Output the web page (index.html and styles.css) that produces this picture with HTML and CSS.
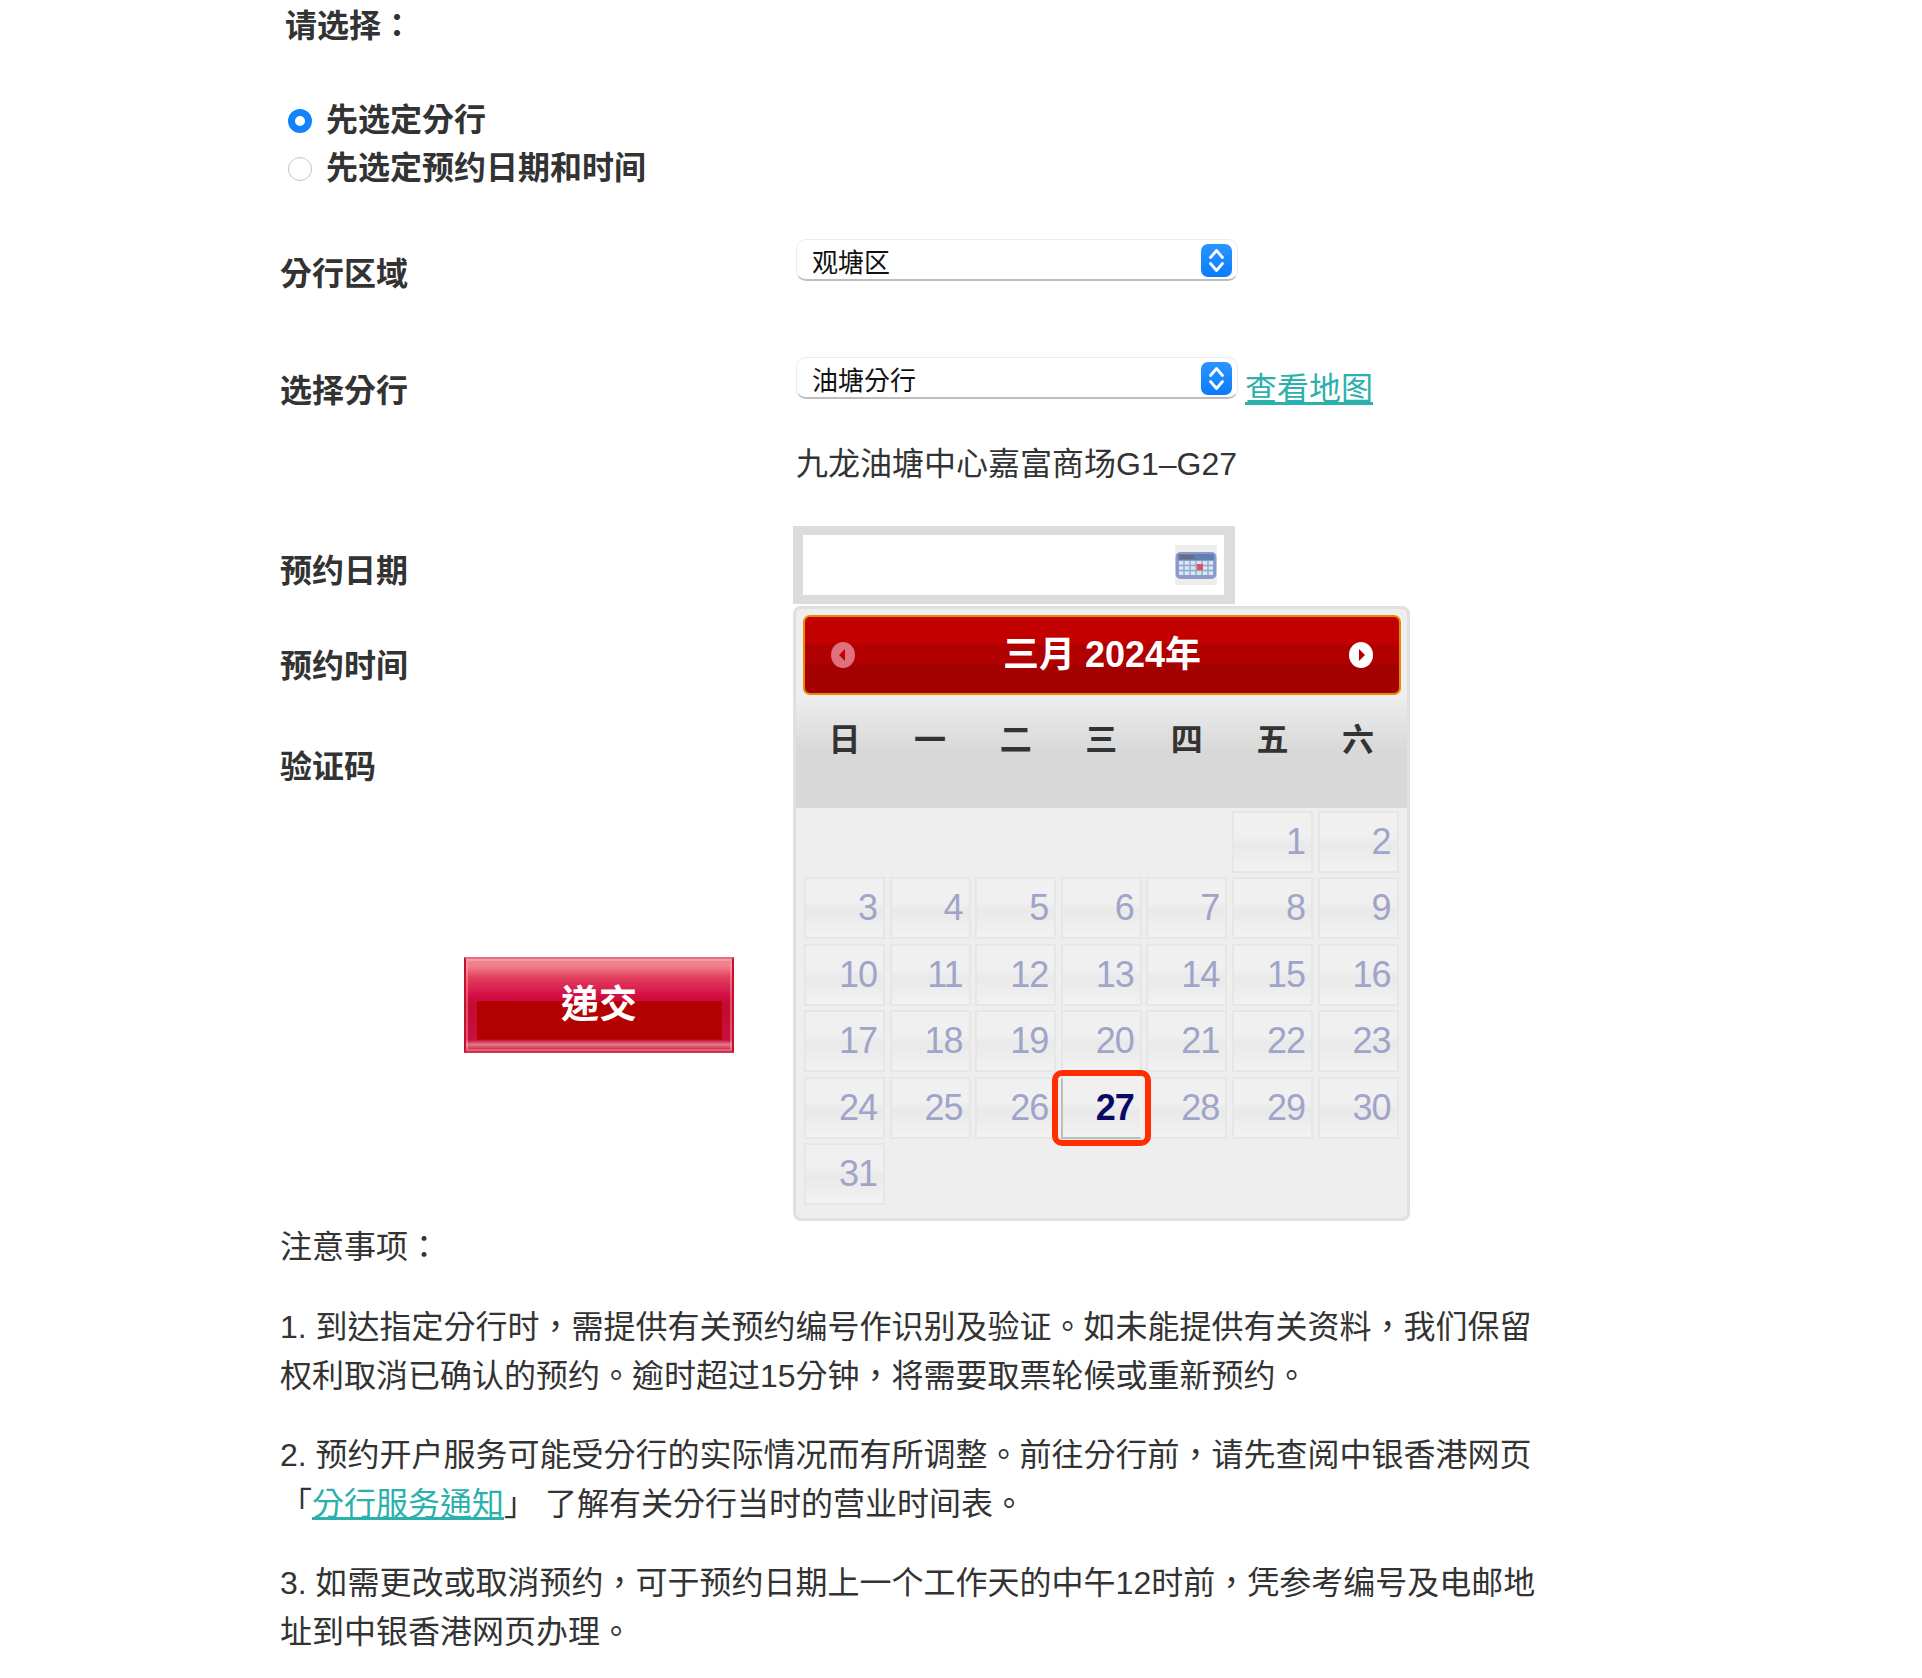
FILE: index.html
```html
<!DOCTYPE html>
<html lang="zh-Hant">
<head>
    <meta charset="utf-8">
    <title>预约开户</title>
    <link rel="stylesheet" href="styles.css">
</head>
<body>
    <div class="page">
        <div class="choose-title">请选择：</div>
        <div class="choices">
            <label class="choice"><input type="radio" name="mode" checked>先选定分行</label>
            <label class="choice"><input type="radio" name="mode">先选定预约日期和时间</label>
        </div>

        <div class="row row-area">
            <div class="field-label">分行区域</div>
            <div class="fake-select">
                <span>观塘区</span>
                <span class="select-arrows">
                    <svg width="31" height="33" viewBox="0 0 31 33"><path d="M9.5 13.5l6-7 6 7M9.5 19.5l6 7 6-7" fill="none" stroke="#fff" stroke-width="2.8" stroke-linecap="round" stroke-linejoin="round"/></svg>
                </span>
            </div>
        </div>

        <div class="row row-branch">
            <div class="field-label">选择分行</div>
            <div class="fake-select">
                <span>油塘分行</span>
                <span class="select-arrows">
                    <svg width="31" height="33" viewBox="0 0 31 33"><path d="M9.5 13.5l6-7 6 7M9.5 19.5l6 7 6-7" fill="none" stroke="#fff" stroke-width="2.8" stroke-linecap="round" stroke-linejoin="round"/></svg>
                </span>
            </div>
            <a class="map-link" href="#">查看地图</a>
        </div>

        <div class="address">九龙油塘中心嘉富商场G1–G27</div>

        <div class="lower">
            <div class="lower-left">
                <div class="field-label label-date">预约日期</div>
                <div class="field-label label-time">预约时间</div>
                <div class="field-label label-code">验证码</div>
                <button class="submit-btn">递交</button>
            </div>
            <div class="lower-right">
                <div class="date-box">
                    <span class="date-icon">
                        <svg width="42" height="40" viewBox="0 0 42 40">
                            <rect width="42" height="40" fill="#eeeeee"/>
                            <rect x="0.5" y="7" width="41" height="27" rx="5" fill="#8e9bca"/>
                            <rect x="3" y="9" width="36" height="6" fill="#5f80b4"/>
                            <rect x="5" y="10" width="14" height="4" fill="#6d6d78"/>
                            <rect x="4" y="16" width="34" height="14" fill="#d5e8f2"/>
                            <path d="M9 16v14M15 16v14M21 16v14M27 16v14M33 16v14M4 20.5h34M4 25.5h34" stroke="#94a6cf" stroke-width="1.4"/>
                            <rect x="22" y="19" width="6" height="6" fill="#e2515c"/>
                        </svg>
                    </span>
                </div>
                <div class="calendar">
                    <div class="cal-head">
                        <svg class="cal-nav" width="26" height="28" viewBox="0 0 26 28"><ellipse cx="13" cy="14" rx="12" ry="13" fill="#e0707f"/><path d="M15 8v12l-6-6z" fill="#c00000"/></svg>
                        <span class="cal-title">三月 2024年</span>
                        <svg class="cal-nav" width="26" height="28" viewBox="0 0 26 28"><ellipse cx="13" cy="14" rx="12" ry="13" fill="#fff"/><path d="M11 8v12l6-6z" fill="#b00000"/></svg>
                    </div>
                    <div class="cal-weekdays">
                        <span>日</span><span>一</span><span>二</span><span>三</span><span>四</span><span>五</span><span>六</span>
                    </div>
                    <div class="cal-days">
                        <div class="day first-day">1</div><div class="day">2</div>
                        <div class="day">3</div><div class="day">4</div><div class="day">5</div><div class="day">6</div><div class="day">7</div><div class="day">8</div><div class="day">9</div>
                        <div class="day">10</div><div class="day">11</div><div class="day">12</div><div class="day">13</div><div class="day">14</div><div class="day">15</div><div class="day">16</div>
                        <div class="day">17</div><div class="day">18</div><div class="day">19</div><div class="day">20</div><div class="day">21</div><div class="day">22</div><div class="day">23</div>
                        <div class="day">24</div><div class="day">25</div><div class="day">26</div><div class="day today">27</div><div class="day">28</div><div class="day">29</div><div class="day">30</div>
                        <div class="day">31</div>
                    </div>
                </div>
            </div>
        </div>

        <div class="notes">
            <div class="notes-title">注意事项：</div>
            <p>1. 到达指定分行时，需提供有关预约编号作识别及验证。如未能提供有关资料，我们保留权利取消已确认的预约。逾时超过15分钟，将需要取票轮候或重新预约。</p>
            <p>2. 预约开户服务可能受分行的实际情况而有所调整。前往分行前，请先查阅中银香港网页「<a href="#">分行服务通知</a>」 了解有关分行当时的营业时间表。</p>
            <p>3. 如需更改或取消预约，可于预约日期上一个工作天的中午12时前，凭参考编号及电邮地址到中银香港网页办理。</p>
        </div>
    </div>
</body>
</html>
```

FILE: styles.css
```css
body {
    margin: 0;
    background-color: #fff;
    color: #333;
    font-family: "Liberation Sans", "Noto Sans CJK TC", sans-serif;
    font-size: 32px;
    line-height: 48px;
}

.page {
    width: 1277px;
    margin-left: 280px;
    padding-top: 2px;
}

.choose-title {
    font-weight: bold;
    padding-left: 5px;
}

.choices {
    margin-top: 46px;
    padding-left: 8px;
}

.choice {
    display: flex;
    align-items: center;
    font-weight: bold;
}

.choice input {
    appearance: none;
    width: 24px;
    height: 24px;
    margin: 2px 14px 0 0;
    border: 1px solid #c4c4c4;
    border-radius: 50%;
    background-color: #fff;
}

.choice input:checked {
    border: 7px solid #1482fa;
}

.row {
    display: flex;
    align-items: flex-start;
}

.row-area {
    margin-top: 47px;
}

.row-branch {
    margin-top: 59px;
}

.field-label {
    font-weight: bold;
}

.row .field-label {
    width: 516px;
    padding-top: 11px;
}

.row-branch .field-label {
    padding-top: 10px;
}

.fake-select {
    display: flex;
    justify-content: space-between;
    width: 442px;
    height: 42px;
    box-sizing: border-box;
    padding: 4px 5px 0 15px;
    border: 1px solid #ececec;
    border-bottom: 2px solid #bdbdbd;
    border-radius: 10px;
    color: #111;
    font-size: 26px;
    line-height: 38px;
}

.select-arrows {
    display: block;
    width: 31px;
    height: 33px;
    border-radius: 7px;
    background: linear-gradient(#2b95ff, #0a7bff);
}

.map-link {
    margin: 8px 0 0 7px;
    color: #2bb0ac;
}

.address {
    margin: 25px 0 0 516px;
}

.lower {
    display: flex;
    margin-top: 38px;
}

.lower-left {
    width: 513px;
}

.label-date {
    margin-top: 21px;
}

.label-time {
    margin-top: 47px;
}

.label-code {
    margin-top: 53px;
}

.submit-btn {
    display: block;
    width: 270px;
    height: 96px;
    margin: 166px 0 0 184px;
    padding: 0 0 9px;
    border: 2px solid #c8102e;
    border-top-color: #e0707f;
    border-bottom-color: #d0354f;
    box-shadow: inset 0 0 0 2px rgba(255, 190, 190, 0.4);
    background:
        linear-gradient(#b30000, #b30000) center 78% / 92% 42% no-repeat,
        linear-gradient(#f0868f 0, #ef7f8a 8%, #e3405f 20%, #d40d45 40%, #c50a30 50%, #c8103f 88%, #e47a86 93%, #c8103a 100%);
    color: #fff;
    font-family: inherit;
    font-size: 38px;
    font-weight: bold;
}

.date-box {
    display: flex;
    justify-content: flex-end;
    align-items: center;
    width: 442px;
    height: 78px;
    box-sizing: border-box;
    padding-right: 7px;
    border: solid #dcdcdc;
    border-width: 9px 11px 9px 10px;
    background-color: #fff;
}

.date-icon {
    display: flex;
}

.calendar {
    width: 617px;
    box-sizing: border-box;
    margin-top: 2px;
    padding-bottom: 13px;
    border: 3px solid #e0e0e0;
    border-radius: 8px;
    background-color: #eee;
}

.cal-head {
    display: flex;
    justify-content: space-between;
    align-items: center;
    height: 80px;
    box-sizing: border-box;
    margin: 6px 6px 0 7px;
    padding: 0 25px;
    border: 2px solid #e68a00;
    border-radius: 7px;
    background: linear-gradient(#c20000 0, #c20000 35%, #b00000 36%, #b00000 62%, #a30000 63%, #a30000 100%);
}

.cal-title {
    color: #fff;
    font-size: 36px;
    font-weight: bold;
}

.cal-weekdays {
    display: grid;
    grid-template-columns: repeat(7, 81px);
    column-gap: 4.6px;
    height: 113px;
    box-sizing: border-box;
    padding: 21px 0 0 8px;
    background: linear-gradient(#eee 0, #d8d8d8 50%, #d8d8d8 100%);
    font-weight: bold;
    text-align: center;
}

.cal-days {
    display: grid;
    grid-template-columns: repeat(7, 81px);
    grid-auto-rows: 62px;
    column-gap: 4.6px;
    row-gap: 4.4px;
    padding: 3px 0 0 8px;
}

.first-day {
    grid-column-start: 6;
}

.day {
    display: flex;
    justify-content: flex-end;
    align-items: center;
    box-sizing: border-box;
    padding-right: 6px;
    border: 2px solid #e6e6e6;
    background: linear-gradient(#f0f0f0 0, #f0f0f0 40%, #e9e9e9 55%, #f2f2f2 100%);
    color: #a1a4c9;
    font-size: 36px;
    letter-spacing: -1px;
}

.today {
    position: relative;
    border-color: #f2f2f2 #f2f2f2 #bdbdbd #bdbdbd;
    color: #0a0a66;
    font-weight: bold;
}

.today::after {
    content: "";
    position: absolute;
    top: -9px;
    right: -11px;
    bottom: -9px;
    left: -11px;
    border: 6px solid #ff2d00;
    border-radius: 10px;
}

.notes p {
    margin: 0 0 30px;
    line-height: 49px;
}

.notes-title {
    margin: 2px 0 32px;
}

.notes a {
    color: #2bb0ac;
}
```
